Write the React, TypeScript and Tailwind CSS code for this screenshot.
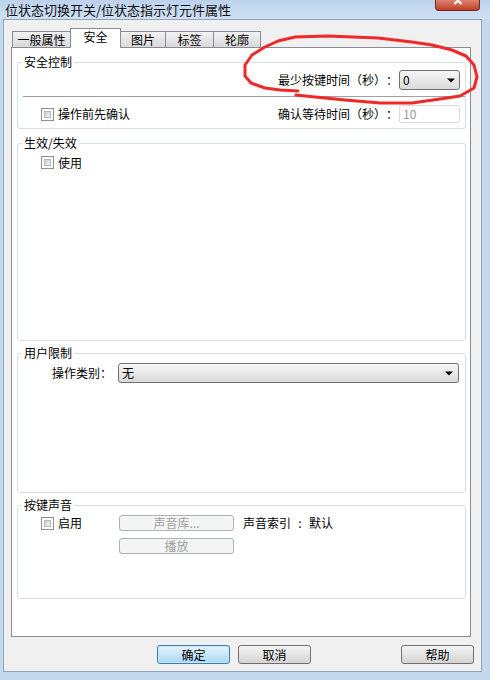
import React from "react";

const font = { fontFamily: '"Noto Sans CJK SC", "Noto Sans", sans-serif' };

const Check = () => (
  <div className="w-[13px] h-[13px] border border-[#8e8f8f] bg-white p-[2px] shrink-0">
    <div className="w-full h-full bg-linear-to-br from-[#c9ced6] to-[#f4f4f4] border border-[#b3b8c0]" />
  </div>
);

const Arrow = () => (
  <svg width="8" height="5" viewBox="0 0 8 5" className="shrink-0">
    <path d="M0 0.5h8L4 4.5z" fill="#000" />
  </svg>
);

const Group = ({
  title,
  className,
  children,
}: {
  title: string;
  className: string;
  children?: React.ReactNode;
}) => (
  <div className={"flex flex-col rounded-[3px] border border-[#d5dfe5] " + className}>
    <div className="-mt-[7px] ml-[4px] px-[2px] w-fit bg-white leading-[12px] text-[12px] text-black">
      {title}
    </div>
    {children}
  </div>
);

const DisabledBtn = ({ label }: { label: string }) => (
  <div className="flex items-center justify-center w-[115px] h-[16px] rounded-[3px] border border-[#adb2b5] bg-[#f4f4f4] text-[12px] leading-[12px] text-[#a0a0a0]">
    {label}
  </div>
);

const Tab = ({ label, w }: { label: string; w: string }) => (
  <div
    className={
      "flex items-center justify-center pt-[1px] h-[16px] border border-b-0 border-[#898c95] bg-linear-to-b from-[#f2f2f2] to-[#d9d9d9] text-[12px] leading-[12px] text-black -ml-px first:ml-0 " +
      w
    }
  >
    {label}
  </div>
);

export default function App() {
  return (
    <div
      className="relative w-[490px] h-[680px] overflow-hidden bg-[#c4d8ee] text-[12px] text-black [text-spacing-trim:space-all]"
      style={font}
    >
      {/* Title bar */}
      <div className="flex items-start justify-between h-[19px] bg-linear-to-b from-[#bcd2ec] to-[#cfe0f3]">
        <div className="ml-[5px] mt-[2px] text-[13px] leading-[15px] text-[#111]">
          位状态切换开关/位状态指示灯元件属性
        </div>
        <div className="mr-[10px] flex justify-center w-[45px] h-[11px] rounded-b-[4px] border border-t-0 border-[#6e2a22] bg-linear-to-b from-[#d98470] to-[#c23b22]">
          <svg width="12" height="8" viewBox="0 0 12 8">
            <path d="M1 -3L8 4M8 -3L1 4" stroke="#fff" strokeWidth="2.2" transform="translate(1.5 0)" />
          </svg>
        </div>
      </div>

      {/* Client area */}
      <div className="ml-[3px] w-[479px] h-[653px] border border-[#8ea3bc] bg-[#f0f0f0] pt-[8px] pl-[7px] flex flex-col">
        {/* Tabs */}
        <div className="flex items-end h-[19px] ml-[1px]">
          <Tab label="一般属性" w="w-[59px]" />
          <div className="relative z-10 -ml-px -mb-px flex justify-center pt-[2px] w-[51px] h-[20px] border border-b-0 border-[#898c95] bg-white text-[12px] leading-[12px]">
            安全
          </div>
          <Tab label="图片" w="w-[46px]" />
          <Tab label="标签" w="w-[49px]" />
          <Tab label="轮廓" w="w-[48px]" />
        </div>

        {/* Panel */}
        <div className="w-[460px] h-[590px] border border-[#898c95] bg-white pl-[5px] flex flex-col">
          <Group title="安全控制" className="mt-[14px] w-[449px] h-[67px]">
            <div className="mt-[2px] flex items-center justify-end pr-[5px]">
              <span className="leading-[12px]">最少按键时间（秒）：</span>
              <div className="ml-[1px] flex items-center justify-between w-[61px] h-[20px] rounded-[3px] border border-[#707070] bg-linear-to-b from-[#f7f7f7] to-[#dadada] pl-[3px] pr-[4px]">
                <span className="leading-[12px]">0</span>
                <Arrow />
              </div>
            </div>
            <div className="mt-[6px] ml-[5px] h-px bg-[#a0a0a0]" />
            <div className="mt-[8px] flex items-center h-[18px]">
              <div className="ml-[23px] flex items-center gap-[4px]">
                <Check />
                <span className="leading-[12px]">操作前先确认</span>
              </div>
              <div className="ml-auto mr-[5px] flex items-center">
                <span className="leading-[12px]">确认等待时间（秒）：</span>
                <div className="ml-[1px] flex items-center w-[61px] h-[18px] border border-[#d9dde2] rounded-[2px] bg-white pl-[3px] text-[#9a9a9a] leading-[12px]">
                  10
                </div>
              </div>
            </div>
          </Group>

          <Group title="生效/失效" className="mt-[14px] w-[449px] h-[198px]">
            <div className="mt-[7px] ml-[23px] flex items-center gap-[4px]">
              <Check />
              <span className="leading-[12px]">使用</span>
            </div>
          </Group>

          <Group title="用户限制" className="mt-[12px] w-[449px] h-[140px]">
            <div className="mt-[4px] ml-[34px] flex items-center">
              <span className="w-[66px] leading-[12px]">操作类别：</span>
              <div className="flex items-center justify-between w-[341px] h-[20px] rounded-[3px] border border-[#707070] bg-linear-to-b from-[#f7f7f7] to-[#dadada] pl-[3px] pr-[5px]">
                <span className="leading-[12px]">无</span>
                <Arrow />
              </div>
            </div>
          </Group>

          <Group title="按键声音" className="mt-[12px] w-[449px] h-[94px]">
            <div className="mt-[4px] ml-[23px] flex items-center h-[16px]">
              <div className="w-[78px] flex items-center gap-[4px]">
                <Check />
                <span className="leading-[12px]">启用</span>
              </div>
              <DisabledBtn label="声音库..." />
              <div className="ml-[9px] flex items-center leading-[12px]">
                <span>声音索引</span>
                <span className="w-[18px] text-center">:</span>
                <span>默认</span>
              </div>
            </div>
            <div className="mt-[7px] ml-[101px]">
              <DisabledBtn label="播放" />
            </div>
          </Group>
        </div>

        {/* Bottom buttons */}
        <div className="mt-[8px] flex items-center">
          <div className="ml-[146px] flex items-center justify-center w-[73px] h-[19px] rounded-[3px] border border-[#3c7fb1] bg-linear-to-b from-[#e5f4fc] to-[#a9d8f3] leading-[12px] shadow-[inset_0_0_0_1px_#bfe6f9]">
            确定
          </div>
          <div className="ml-[8px] flex items-center justify-center w-[73px] h-[19px] rounded-[3px] border border-[#707070] bg-linear-to-b from-[#f4f4f4] to-[#d4d4d4] leading-[12px]">
            取消
          </div>
          <div className="ml-auto mr-[7px] flex items-center justify-center w-[73px] h-[19px] rounded-[3px] border border-[#707070] bg-linear-to-b from-[#f4f4f4] to-[#d4d4d4] leading-[12px]">
            帮助
          </div>
        </div>
      </div>

      {/* Red hand-drawn ellipse annotation */}
      <svg
        className="absolute inset-0 pointer-events-none"
        width="490"
        height="680"
        viewBox="0 0 490 680"
      >
        <path
          d="M298 91 L280 90 L265 88 L251 83 L245 76 L245 65 L252 55 L265 47 L278 41 L295 37 L328 36 L378 38 L412 42 L432 45 L452 50 L466 56 L474 65 L477 77 L474 88 L460 96 L440 99 L412 103 L380 103 L345 100 L315 97 L296 95"
          fill="none"
          stroke="#f02828"
          strokeWidth="3"
          strokeLinejoin="round"
          strokeLinecap="round"
        />
      </svg>
    </div>
  );
}
